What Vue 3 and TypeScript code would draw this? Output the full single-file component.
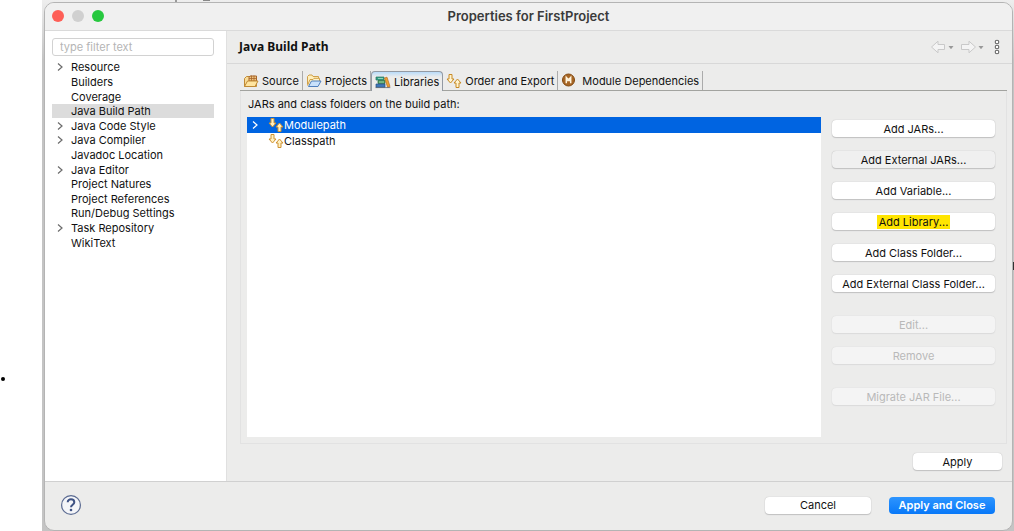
<script setup lang="ts">
import { ref } from 'vue'

interface Category { name: string; expandable?: boolean }
interface PathAction { label: string; kind?: 'pressed' | 'marked' | 'disabled'; spaced?: boolean }

const categories: Category[] = [
  { name: 'Resource', expandable: true },
  { name: 'Builders' },
  { name: 'Coverage' },
  { name: 'Java Build Path' },
  { name: 'Java Code Style', expandable: true },
  { name: 'Java Compiler', expandable: true },
  { name: 'Javadoc Location' },
  { name: 'Java Editor', expandable: true },
  { name: 'Project Natures' },
  { name: 'Project References' },
  { name: 'Run/Debug Settings' },
  { name: 'Task Repository', expandable: true },
  { name: 'WikiText' },
]
const tabs = ['Source', 'Projects', 'Libraries', 'Order and Export', 'Module Dependencies']
const entries = ['Modulepath', 'Classpath']
const actions: PathAction[] = [
  { label: 'Add JARs...' },
  { label: 'Add External JARs...', kind: 'pressed' },
  { label: 'Add Variable...' },
  { label: 'Add Library...', kind: 'marked' },
  { label: 'Add Class Folder...' },
  { label: 'Add External Class Folder...' },
  { label: 'Edit...', kind: 'disabled', spaced: true },
  { label: 'Remove', kind: 'disabled' },
  { label: 'Migrate JAR File...', kind: 'disabled', spaced: true },
]

const filter = ref('')
const category = ref('Java Build Path')
const activeTab = ref('Libraries')
const entry = ref('Modulepath')
</script>

<template>
  <div class="page">
    <aside class="margin"><span class="bullet"></span></aside>
    <div class="backdrop">
      <main class="window">
        <header class="titlebar">
          <div class="lights">
            <button class="light close" aria-label="Close"></button>
            <button class="light minimize" aria-label="Minimize"></button>
            <button class="light maximize" aria-label="Zoom"></button>
          </div>
          <h1>Properties for FirstProject</h1>
        </header>

        <div class="body">
          <nav class="sidebar">
            <input v-model="filter" class="filter" type="text" placeholder="type filter text" aria-label="Filter" />
            <ul class="categories">
              <li v-for="c in categories" :key="c.name">
                <button class="category" :class="{ selected: c.name === category }" @click="category = c.name">
                  <svg class="chevron" viewBox="0 0 6 8" aria-hidden="true">
                    <path v-if="c.expandable" d="M1 .5 5 4 1 7.5" />
                  </svg>
                  <span>{{ c.name }}</span>
                </button>
              </li>
            </ul>
          </nav>

          <section class="content">
            <div class="heading">
              <h2>Java Build Path</h2>
              <div class="history">
                <button aria-label="Back">
                  <svg width="23" height="14" viewBox="0 0 23 14">
                    <path class="arrow" d="M.5 7 7 1.2V4.5h6.5v5H7v3.3Z" />
                    <path class="caret" d="M17.5 6h5L20 9.3Z" />
                  </svg>
                </button>
                <button aria-label="Forward">
                  <svg width="23" height="14" viewBox="0 0 23 14">
                    <path class="arrow" d="M14.5 7 8 1.2V4.5H.5v5H8v3.3Z" />
                    <path class="caret" d="M17.5 6h5L20 9.3Z" />
                  </svg>
                </button>
                <button aria-label="View menu">
                  <svg width="6" height="16" viewBox="0 0 6 16">
                    <g fill="#fff" stroke="#666" stroke-width="1.1">
                      <circle cx="3" cy="3" r="1.8" /><circle cx="3" cy="8" r="1.8" /><circle cx="3" cy="13" r="1.8" />
                    </g>
                  </svg>
                </button>
              </div>
            </div>

            <div class="folder">
              <div class="tabs" role="tablist">
                <button
                  v-for="t in tabs" :key="t" class="tab" role="tab"
                  :class="{ active: t === activeTab }" :aria-selected="t === activeTab" @click="activeTab = t"
                >
                  <svg v-if="t === 'Source'" width="16" height="16" viewBox="0 0 16 16">
                    <path d="M1.5 13.5v-8l2-2h3l1 1.5h6v8.5Z" fill="#f8dc98" stroke="#c08a35" />
                    <path d="M6 4.5 7 3h6.5V8H6Z" fill="#efc684" stroke="#a8662a" />
                    <path d="M8.5 2.5V8M11 2.5V8M6 5.5h8" stroke="#a8662a" stroke-width=".8" />
                    <path d="M1.5 13.5 4.5 8H15l-3 5.5Z" fill="#ffe5a0" stroke="#c08a35" />
                  </svg>
                  <svg v-else-if="t === 'Projects'" width="16" height="16" viewBox="0 0 16 16">
                    <path d="M1.5 11.5v-8l1.5-1.5h3l1 1.5h5.5v6" fill="#ffefbb" stroke="#d0a04a" />
                    <path d="M1.5 12.5 4 6.5h3l1-1.2h5.5v3" fill="#fff3c9" stroke="#d0a04a" />
                    <path d="M2.5 13.5 5.5 8H15l-3 5.5Z" fill="#c9e1fb" stroke="#4f7fbd" />
                  </svg>
                  <svg v-else-if="t === 'Libraries'" width="16" height="16" viewBox="0 0 16 16">
                    <path d="M1 3h8v3H1Z" fill="#33a58a" stroke="#26705f" stroke-width=".7" />
                    <path d="M3 6.5h7v3H3Z" fill="#4c9b58" stroke="#276b40" stroke-width=".7" />
                    <path d="M1 10h9v3.3H1Z" fill="#3f78b8" stroke="#285285" stroke-width=".7" />
                    <path d="M3 4.5h5M4 8h5" stroke="#a9dfc8" stroke-width=".8" />
                    <path d="m9.5 4 2.5-.8 3 9.3-2.3.9Z" fill="#eda334" stroke="#b8691c" stroke-width=".7" />
                    <path d="M.5 13.6h14.8" stroke="#5c6370" stroke-width=".8" />
                  </svg>
                  <svg v-else-if="t === 'Order and Export'" width="16" height="14" viewBox="0 0 16 14">
                    <path d="M3 .5h3V5h2L4.500 9 1 5h2ZM10 13.500h3V9h2l-3.500-4L8 9h2Z" fill="#fff4cf" stroke="#c88a25" />
                  </svg>
                  <svg v-else width="16" height="16" viewBox="0 0 16 16">
                    <circle cx="7.5" cy="7" r="6" fill="#a76625" stroke="#82480f" />
                    <path d="M5.3 10.2V4.4L7.5 6.8l2.2-2.4v5.8M5.3 7.5h4.4" fill="none" stroke="#fff4dd" stroke-width="1.5" />
                  </svg>
                  <span>{{ t }}</span>
                </button>
              </div>

              <div class="panel">
                <p id="path-caption" class="caption">JARs and class folders on the build path:</p>
                <div class="columns">
                  <ul class="entries" aria-labelledby="path-caption">
                    <li v-for="e in entries" :key="e">
                      <button class="entry" :class="{ selected: e === entry }" @click="entry = e">
                        <svg class="chevron" viewBox="0 0 6 8" aria-hidden="true">
                          <path v-if="e === 'Modulepath'" d="M1 .5 5 4 1 7.5" />
                        </svg>
                        <svg width="16" height="14" viewBox="0 0 16 14" aria-hidden="true">
                          <path d="M3 .5h3V5h2L4.5 9 1 5h2ZM10 13.5h3V9h2l-3.5-4L8 9h2Z" fill="#fff0c0" stroke="#cf9231" />
                        </svg>
                        <span>{{ e }}</span>
                      </button>
                    </li>
                  </ul>
                  <div class="actions">
                    <button
                      v-for="a in actions" :key="a.label" class="push"
                      :class="[a.kind, { spaced: a.spaced }]" :disabled="a.kind === 'disabled'"
                    ><span>{{ a.label }}</span></button>
                  </div>
                </div>
              </div>
            </div>

            <div class="apply-row"><button class="push apply">Apply</button></div>
          </section>
        </div>

        <footer class="footer">
          <button class="help" aria-label="Help">
            <svg width="22" height="22" viewBox="0 0 22 22">
              <circle cx="11" cy="11" r="9.4" fill="#f4f5f8" stroke="#5a6a91" stroke-width="1.2" />
              <path d="M7.7 8.3C7.7 4.2 14.3 4.4 14.3 8.2c0 2.4-3.3 2.6-3.3 5" fill="none" stroke="#3e5284" stroke-width="2" />
              <circle cx="11" cy="16" r="1.3" fill="#3e5284" />
            </svg>
          </button>
          <div class="dialog-buttons">
            <button class="push wide">Cancel</button>
            <button class="push wide primary">Apply and Close</button>
          </div>
        </footer>
      </main>
    </div>
  </div>
</template>

<style>
body { background: #fff; }
</style>

<style scoped>
* { box-sizing: border-box; }
.page {
  display: flex;
  min-height: 100vh;
  font: 11px/14px Inter, "Liberation Sans", sans-serif;
  color: #111;
}
button { font: inherit; color: inherit; border: 0; padding: 0; background: none; }
ul { list-style: none; margin: 0; padding: 0; }
h1, h2, p { margin: 0; }
svg { display: block; flex: none; }

.margin { flex: none; width: 42px; padding-top: 377px; }
.bullet { display: block; width: 4px; height: 4px; margin-left: 1px; border-radius: 50%; background: #000; }
.backdrop {
  flex: 1;
  display: flex;
  padding: 2px 1px 0 2px;
  background:
    linear-gradient(#999, #999) 133px 0 / 2px 2px no-repeat,
    linear-gradient(#888, #888) 161px 0 / 7px 1px no-repeat,
    linear-gradient(#333, #333) right 262px / 1px 8px no-repeat,
    linear-gradient(#eee 0, #c4c4c4 60px);
}
.window {
  flex: 1;
  display: flex;
  flex-direction: column;
  min-width: 0;
  border: 1px solid #b4b4b4;
  border-radius: 10px;
  overflow: hidden;
  background: #ececeb;
}

.titlebar {
  display: grid;
  grid-template-columns: 1fr auto 1fr;
  align-items: center;
  height: 28px;
  padding-bottom: 1px;
  border-bottom: 1px solid #dadada;
  background: #f0f0f0;
}
.titlebar h1 { font-size: 13px; font-weight: 600; color: #3a3a3a; }
.lights { display: flex; gap: 8px; padding-left: 7px; }
.light { width: 12px; height: 12px; border-radius: 50%; }
.close { background: #fe5f57; }
.minimize { background: #d0d0d0; }
.maximize { background: #27c83f; }

.body { flex: 1; display: flex; }
.sidebar { flex: none; width: 181px; padding: 7px 12px 0 7px; background: #fff; }
.filter {
  display: block;
  width: 100%;
  height: 18px;
  padding: 0 7px;
  border: 1px solid #d2d2d2;
  border-radius: 3px;
  background: #fff;
  font: inherit;
  outline: 0;
}
.filter::placeholder { color: #b5b5b5; opacity: 1; }
.categories { display: grid; grid-auto-rows: 1fr; height: 190px; margin-top: 4px; }
.categories li { display: flex; }
.category { flex: 1; display: flex; align-items: center; gap: 8px; padding-left: 5px; text-align: left; }
.category.selected { background: #dcdcdc; }
.chevron { width: 6px; height: 8px; fill: none; stroke: #6c6c6c; stroke-width: 1.2; }

.content { flex: 1; min-width: 0; display: flex; flex-direction: column; border-left: 1px solid #e0e0e0; }
.heading {
  display: flex;
  align-items: center;
  justify-content: space-between;
  height: 33px;
  padding: 0 12px;
  border-bottom: 1px solid #d8d8d8;
}
.heading h2 { font: 700 12px/16px "Noto Sans", sans-serif; }
.history { display: flex; align-items: center; gap: 7px; }
.history button:last-child { margin-left: 3px; }
.arrow { fill: #f4f4f4; stroke: #c9c9c9; }
.caret { fill: #999; }

.folder { flex: 1; display: flex; flex-direction: column; margin: 6px 5px 0 13px; }
.tabs { display: flex; height: 21px; padding-top: 1px; border-bottom: 1px solid #a2a39f; }
.tab { display: flex; align-items: center; gap: 3px; height: 19px; padding: 0 3px; border-right: 1px solid #ababab; }
.tab.active {
  height: 20px;
  border: 1px solid #939aa3;
  border-bottom: 0;
  border-radius: 4px 4px 0 0;
  background: linear-gradient(#b9dcfa, #ececeb 5px);
}
.tab:last-child { gap: 5px; }
.panel { flex: 1; display: flex; flex-direction: column; padding: 6px 11px 6px 6px; border: 1px solid #e2e2e2; border-top: 0; }
.caption { height: 20px; padding-left: 1px; }
.columns { flex: 1; display: flex; gap: 11px; }
.entries { flex: 1; background: #fff; }
.entry { display: flex; align-items: center; width: 100%; height: 16px; padding-left: 5px; text-align: left; }
.entry .chevron { margin-right: 10px; }
.entry.selected { background: #0064e1; color: #fff; }
.entry.selected .chevron { stroke: #fff; }
.actions { flex: none; display: flex; flex-direction: column; gap: 14px; width: 163px; padding-top: 3px; }
.push {
  display: flex;
  align-items: center;
  justify-content: center;
  height: 17px;
  border-radius: 4px;
  background: #fff;
  box-shadow: 0 0 1px #aaa, 0 1px 1px #c4c4c4;
}
.push.spaced { margin-top: 10px; }
.push.pressed { background: #f0f0f0; }
.push.disabled { background: #f4f4f4; color: #b9b9b9; box-shadow: 0 0 1px #ccc, 0 1px 1px #ddd; }
.push.marked span { padding: 0 2px; background: #ffe500; }
.apply-row { display: flex; justify-content: flex-end; padding: 9px 10px 11px; }
.apply { width: 89px; }

.footer {
  display: flex;
  align-items: center;
  justify-content: space-between;
  height: 49px;
  padding: 0 17px 2px 15px;
  border-top: 1px solid #d0d0d0;
}
.dialog-buttons { display: flex; gap: 18px; }
.wide { width: 106px; }
.primary { background: linear-gradient(#2d95ff, #0878f8); color: #fff; font-weight: 600; box-shadow: none; }
</style>
